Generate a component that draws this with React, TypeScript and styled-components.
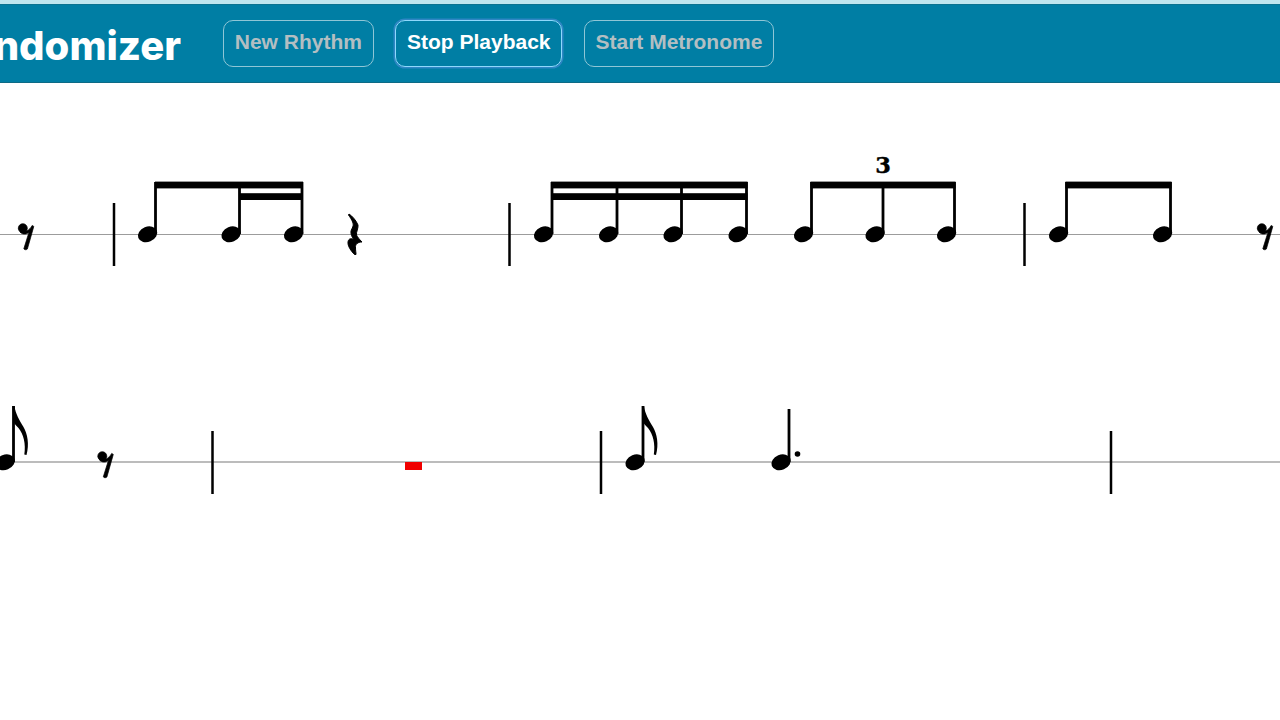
import styled, { createGlobalStyle } from "styled-components";

const GlobalStyle = createGlobalStyle`
  html, body {
    margin: 0;
    padding: 0;
    background: #ffffff;
    overflow: hidden;
  }
`;

const Page = styled.div`
  width: 1280px;
  height: 720px;
  overflow: hidden;
  border-top: 4px solid #bfe6ef;
  box-sizing: border-box;
`;

const Header = styled.header`
  display: flex;
  align-items: center;
  gap: 21.5px;
  height: 79px;
  box-sizing: border-box;
  background: #007ea4;
  border-top: 1px solid #0b7391;
  border-bottom: 1px solid #0d6a85;
`;

const TitleClip = styled.div`
  display: flex;
  justify-content: flex-end;
  flex: none;
  width: 181px;
  margin-right: 20.5px;
  padding-top: 5px;
  overflow: hidden;
`;

const Title = styled.h1`
  flex: none;
  margin: 0;
  font-family: "Inter", "Liberation Sans", sans-serif;
  font-size: 40px;
  font-weight: 800;
  line-height: 50px;
  color: #ffffff;
  white-space: nowrap;
`;

const Button = styled.button<{ $active?: boolean }>`
  flex: none;
  height: 47px;
  padding: 0 10.75px 3px;
  box-sizing: border-box;
  font-family: "Liberation Sans", Arial, sans-serif;
  font-size: 21px;
  font-weight: 700;
  background: transparent;
  border-radius: 10px;
  border: 1px solid ${(p) => (p.$active ? "#8fd8fb" : "#8fc6d6")};
  color: ${(p) => (p.$active ? "#ffffff" : "#b3bec2")};
  box-shadow: ${(p) => (p.$active ? "0 0 0 1.5px #2f86c4" : "none")};
`;

const Sheet = styled.main`
  display: flex;
  flex-direction: column;
  gap: 98px;
  padding-top: 61px;
`;

const Staff = styled.svg`
  display: block;
  width: 1280px;
  height: 130px;
  flex: none;
`;

const LINE_Y = 90;

const Head = ({ x }: { x: number }) => (
  <ellipse cx={x} cy={0.3} rx={10} ry={7.6} transform={`rotate(-22 ${x} 0)`} fill="#000" />
);

const Stem = ({ x, top }: { x: number; top: number }) => (
  <rect x={x - 1.4} y={top} width={2.8} height={-top} fill="#000" />
);

const Bar = ({ x }: { x: number }) => (
  <rect x={x - 1.25} y={-31} width={2.5} height={63} fill="#000" />
);

const Beam = ({ from, to, level = 0 }: { from: number; to: number; level?: number }) => (
  <rect x={from} y={-52.4 + level * 11.6} width={to - from} height={6.8} fill="#000" />
);

const EighthRest = ({ x }: { x: number }) => (
  <g transform={`translate(${x} 0)`} fill="#000" stroke="#000" strokeWidth={0.7}>
    <circle cx={4.8} cy={-5.8} r={4.5} />
    <path d="M3 -3.5 C7 -1.5 11 -3 14.2 -8.6 L15.8 -7.6 L9.4 15 C8.6 16 6.4 16 5.8 14.8 L11 -1.8 C8.6 0.6 4.6 0.8 2 -2 Z" />
  </g>
);

const QuarterRest = ({ x }: { x: number }) => (
  <g transform={`translate(${x} 0)`}>
    <path
      d="M2 -20 C5 -18 9 -14 11 -9 C11.5 -6 9 -2 9.5 1 C10.5 3 12 5 15 8 C11 8 8 10 8.5 14 C8.5 17 9 18 9 20.5 L7.5 20.5 C4 17 0.5 12 1 8 C1.5 4 5 4 7 6 C5 3 3.5 0 4 -3 C5 -6 7 -8 6 -11 C5 -14 3 -17 1.5 -19 Z"
      fill="#000"
      stroke="#000"
      strokeWidth={1}
    />
  </g>
);

const Flag = ({ x, top }: { x: number; top: number }) => (
  <path
    d={`M${x - 1} ${top} L${x + 1} ${top} C${x + 2} ${top + 8} ${x + 6} ${top + 14} ${x + 10} ${top + 21} C${x + 14} ${top + 28} ${x + 16} ${top + 38} ${x + 13} ${top + 49} L${x + 10.8} ${top + 48.6} C${x + 12.5} ${top + 38} ${x + 10} ${top + 28} ${x + 5} ${top + 22} C${x + 3} ${top + 20} ${x + 1} ${top + 18} ${x} ${top + 16} Z`}
    fill="#000"
  />
);

const Line = ({ heavy }: { heavy?: boolean }) => (
  <rect
    x={0}
    y={heavy ? -1 : 0}
    width={1280}
    height={heavy ? 2 : 1}
    fill={heavy ? "#bcbcbc" : "#9c9c9c"}
  />
);

const Note = ({ x, top, stem }: { x: number; top: number; stem: number }) => (
  <>
    <Head x={x} />
    <Stem x={stem} top={top} />
  </>
);

export default function App() {
  return (
    <Page>
      <GlobalStyle />
      <Header>
        <TitleClip>
          <Title>Rhythm Randomizer</Title>
        </TitleClip>
        <Button disabled>New Rhythm</Button>
        <Button $active>Stop Playback</Button>
        <Button disabled>Start Metronome</Button>
      </Header>
      <Sheet>
        <Staff viewBox="0 0 1280 130">
          <g transform={`translate(0 ${LINE_Y})`}>
            <Line />
            <EighthRest x={18} />
            <Bar x={114} />
            <Note x={147.5} stem={155.5} top={-52} />
            <Note x={231} stem={239.5} top={-52} />
            <Note x={293.5} stem={302} top={-52} />
            <Beam from={155} to={303} />
            <Beam from={239} to={303} level={1} />
            <QuarterRest x={347} />
            <Bar x={509.5} />
            <Note x={543.5} stem={552} top={-52} />
            <Note x={608.5} stem={617} top={-52} />
            <Note x={673} stem={681.5} top={-52} />
            <Note x={738} stem={746.5} top={-52} />
            <Beam from={551} to={747.5} />
            <Beam from={551} to={747.5} level={1} />
            <Note x={803.5} stem={811.5} top={-52} />
            <Note x={875} stem={883} top={-52} />
            <Note x={946.5} stem={954.5} top={-52} />
            <Beam from={810.5} to={955.5} />
            <text
              x={883}
              y={-61}
              textAnchor="middle"
              fontFamily="'DejaVu Serif', serif"
              fontWeight={700}
              fontSize={22.5}
              fill="#000"
              stroke="#000"
              strokeWidth={0.4}
            >
              3
            </text>
            <Bar x={1024.5} />
            <Note x={1058.5} stem={1066.5} top={-52} />
            <Note x={1162.5} stem={1170.5} top={-52} />
            <Beam from={1065.5} to={1171.5} />
            <EighthRest x={1257} />
          </g>
        </Staff>
        <Staff viewBox="0 0 1280 130">
          <g transform={`translate(0 ${LINE_Y})`}>
            <Line heavy />
            <Note x={5} stem={13.5} top={-56} />
            <Flag x={13.5} top={-56} />
            <EighthRest x={97.5} />
            <Bar x={212.5} />
            <rect x={405} y={0} width={17} height={8} fill="#f00000" />
            <Bar x={601} />
            <Note x={635} stem={643} top={-56} />
            <Flag x={643} top={-56} />
            <Note x={781} stem={789} top={-53} />
            <circle cx={797.5} cy={-8} r={2.8} fill="#000" />
            <Bar x={1111} />
          </g>
        </Staff>
      </Sheet>
    </Page>
  );
}
